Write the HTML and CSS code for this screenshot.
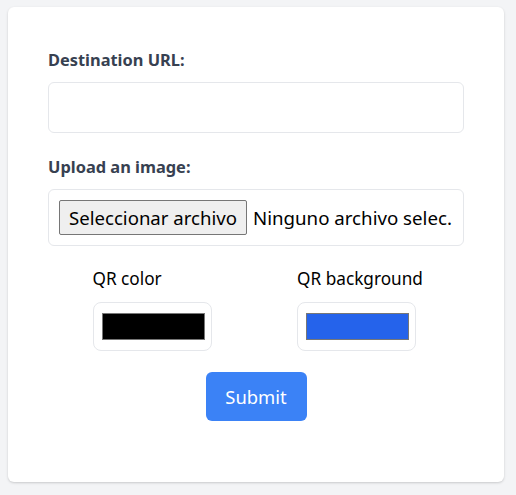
FILE: index.html
```html
<!DOCTYPE html>
<html lang="es">
<head>
<meta charset="utf-8">
<title>QR generator</title>
<link rel="stylesheet" href="styles.css">
</head>
<body>
<main class="card">
  <form class="form">
    <div class="field">
      <label class="label" for="url">Destination URL:</label>
      <input class="text-input" id="url" type="text">
    </div>
    <div class="field">
      <span class="label">Upload an image:</span>
      <div class="file-box">
        <span class="file-btn">Seleccionar archivo</span>
        <span class="file-name">Ninguno archivo selec.</span>
      </div>
    </div>
    <div class="colors">
      <div class="color-col">
        <div class="color-item">
          <span class="color-label">QR color</span>
          <div class="color-box"><span class="swatch swatch-black"></span></div>
        </div>
      </div>
      <div class="color-col">
        <div class="color-item">
          <span class="color-label">QR background</span>
          <div class="color-box"><span class="swatch swatch-blue"></span></div>
        </div>
      </div>
    </div>
    <div class="actions">
      <button class="submit" type="button">Submit</button>
    </div>
  </form>
</main>
</body>
</html>
```
FILE: styles.css
```css
* { box-sizing: border-box; }
html, body { margin: 0; padding: 0; }
body {
  background: #f3f4f6;
  font-family: "Noto Sans", "Open Sans", sans-serif;
  padding: 7px 12px 0 8px;
  min-height: 495px;
}
.card {
  background: #ffffff;
  border-radius: 6px;
  box-shadow: 0 1px 3px rgba(0,0,0,0.12), 0 1px 2px rgba(0,0,0,0.06);
  width: 496px;
  padding: 40px 40px 40px 40px;
  height: 475px;
}
.form { display: flex; flex-direction: column; }
.field { display: flex; flex-direction: column; margin-bottom: 21px; }
.label {
  font-weight: 700;
  font-size: 16.4px;
  line-height: 24px;
  color: #374151;
  margin-bottom: 11px;
  padding-top: 1px;
  height: 24px;
}
.text-input {
  height: 51px;
  border: 1px solid #e5e7eb;
  border-radius: 6px;
  font: inherit;
  padding: 0 12px;
  outline: none;
}
.file-box {
  height: 57px;
  border: 1px solid #e5e7eb;
  border-radius: 6px;
  display: flex;
  align-items: center;
  padding: 0 10px;
  gap: 6px;
  white-space: nowrap;
  overflow: hidden;
}
.file-btn {
  font-size: 18.6px;
  line-height: 33px;
  height: 35px;
  padding: 0 9px;
  background: #efefef;
  border: 1px solid #767676;
  border-radius: 2px;
  color: #000;
}
.file-name { font-size: 18.7px; color: #000; }
.colors {
  display: grid;
  grid-template-columns: 1fr 1fr;
}
.color-col { display: flex; justify-content: center; }
.color-item { display: flex; flex-direction: column; align-items: flex-start; }
.color-label {
  font-size: 17.2px;
  line-height: 24px;
  color: #000;
  margin-bottom: 11px;
}
.color-box {
  width: 119px;
  height: 49px;
  border: 1px solid #e5e7eb;
  border-radius: 8px;
  padding: 10px 6px 10px 8px;
}
.swatch {
  display: block;
  width: 103px;
  height: 27px;
  border: 1px solid #777777;
}
.swatch-black { background: #000000; }
.swatch-blue { background: #2563eb; }
.actions { display: flex; justify-content: center; margin-top: 21px; }
.submit {
  background: #3b82f6;
  color: #fff;
  border: none;
  border-radius: 6px;
  font-family: inherit;
  font-size: 18.4px;
  width: 101px;
  height: 49px;
  cursor: pointer;
}
```
